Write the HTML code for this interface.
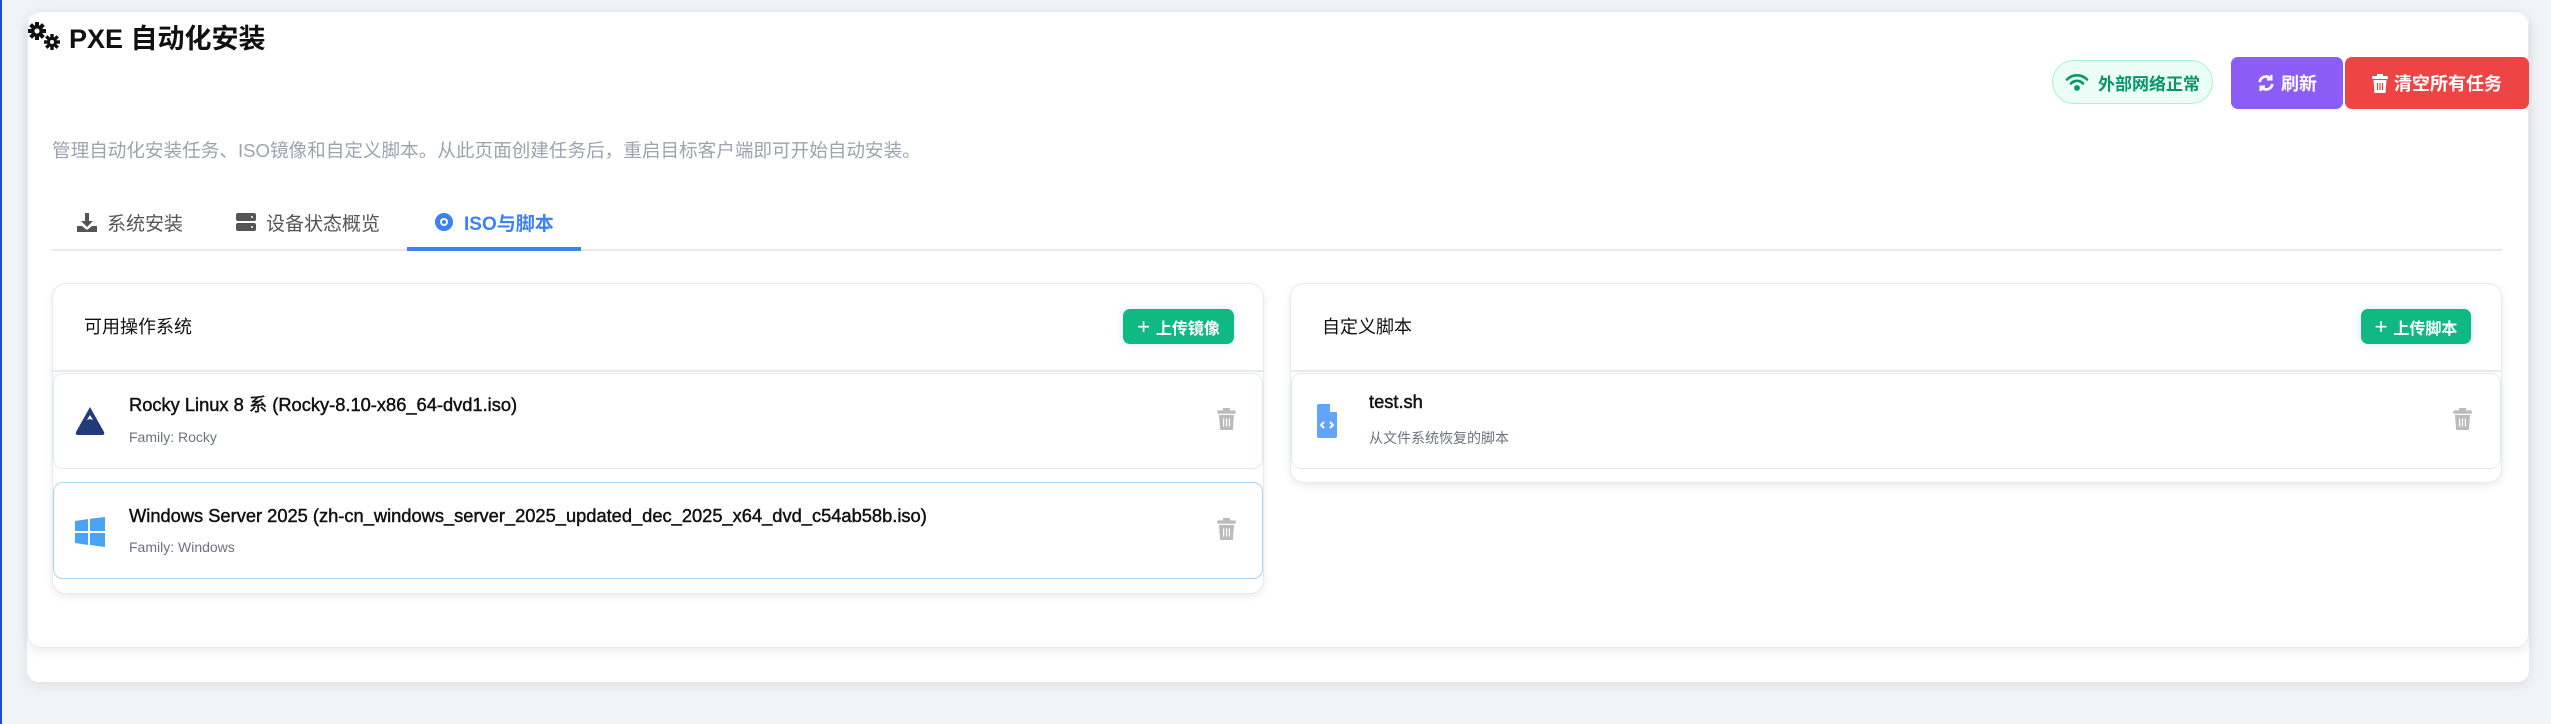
<!DOCTYPE html>
<html><head><meta charset="utf-8"><style>
*{box-sizing:border-box;margin:0;padding:0}
body{width:2551px;height:724px;background:#f1f3f6;font-family:"Liberation Sans","Noto Sans CJK SC",sans-serif;position:relative;overflow:hidden}
.abs{position:absolute}
.outer{left:27px;top:11px;width:2502px;height:671px;background:#fff;border-radius:12px;box-shadow:0 4px 12px rgba(0,0,0,.08)}
.inner{left:27px;top:11px;width:2502px;height:637px;background:#fff;border-radius:14px;border:1px solid #e5e9f0;box-shadow:0 4px 10px rgba(0,0,0,.07)}
.title{left:27px;top:17px;font-size:27px;font-weight:700;color:#111;display:flex;align-items:center;gap:8px;height:38px}
.badge{left:2052px;top:60px;width:161px;height:44px;border-radius:22px;background:#ecfdf5;border:1px solid #a7f3d0;color:#059669;font-weight:700;font-size:17px;display:flex;align-items:center;justify-content:center;gap:9px}
.btn{display:flex;align-items:center;justify-content:center;gap:6px;color:#fff;font-weight:700;font-size:18px;border-radius:7px}
.desc{left:52px;top:136px;font-size:18.6px;color:#9ca3af}
.tab{top:206px;height:32px;display:flex;align-items:center;gap:10px;font-size:19px;color:#555}
.panel{background:#fff;border:1px solid #e5e9f0;border-radius:14px;box-shadow:0 3px 8px rgba(0,0,0,.08)}
.ph{font-size:18px;color:#111}
.up{background:#10b981;color:#fff;font-weight:700;font-size:16px;border-radius:7px;display:flex;align-items:center;justify-content:center;gap:6px;box-shadow:0 0 10px rgba(59,130,246,.2)}
.item{background:#fff;border:1px solid #e3e8f0;border-radius:10px}
.it{font-size:18.3px;font-weight:400;color:#111;-webkit-text-stroke:0.45px #111}
.fm{font-size:14px;color:#6b7280}
</style></head><body>
<div class="abs" style="left:0;top:0;width:2px;height:724px;background:#1d4ed8"></div>
<div class="abs outer"></div>
<div class="abs inner"></div>
<div class="abs title">
<svg width="34" height="30" viewBox="0 0 34 30"><g fill="#111"><circle cx="10" cy="10" r="6"/><g stroke="#111" stroke-width="4"><line x1="10" y1="1" x2="10" y2="19"/><line x1="1" y1="10" x2="19" y2="10"/><line x1="3.6" y1="3.6" x2="16.4" y2="16.4"/><line x1="16.4" y1="3.6" x2="3.6" y2="16.4"/></g><circle cx="10" cy="10" r="2.5" fill="#fff"/><circle cx="25" cy="21" r="5"/><g stroke="#111" stroke-width="3.4"><line x1="25" y1="13" x2="25" y2="29"/><line x1="17" y1="21" x2="33" y2="21"/><line x1="19.3" y1="15.3" x2="30.7" y2="26.7"/><line x1="30.7" y1="15.3" x2="19.3" y2="26.7"/></g><circle cx="25" cy="21" r="2" fill="#fff"/></g></svg>
<span>PXE 自动化安装</span></div>
<div class="abs badge"><svg width="24" height="18" viewBox="0 0 24 18" fill="none" stroke="#059669" stroke-width="2.6" stroke-linecap="round"><path d="M2 6.5a14 14 0 0 1 20 0"/><path d="M6 10.5a8 8 0 0 1 12 0"/><circle cx="12" cy="15" r="1.6" fill="#059669"/></svg>外部网络正常</div>
<div class="abs btn" style="left:2231px;top:57px;width:112px;height:52px;background:#8b5cf6"><svg width="18" height="18" viewBox="0 0 20 20" fill="none" stroke="#fff" stroke-width="3"><path d="M3 9a7 7 0 0 1 12-4"/><path d="M17 11a7 7 0 0 1-12 4"/><path d="M16 1v5h-5" stroke-width="2.5"/><path d="M4 19v-5h5" stroke-width="2.5"/></svg>刷新</div>
<div class="abs btn" style="left:2345px;top:57px;width:184px;height:52px;background:#ef4444"><svg width="16" height="19" viewBox="0 0 16 19" fill="#fff"><rect x="0" y="2" width="16" height="3" rx="1"/><rect x="5" y="0" width="6" height="3"/><path d="M1.5 6h13l-1 13h-11z"/><g stroke="#ef4444" stroke-width="1.2"><line x1="5.5" y1="9" x2="5.5" y2="16"/><line x1="8" y1="9" x2="8" y2="16"/><line x1="10.5" y1="9" x2="10.5" y2="16"/></g></svg>清空所有任务</div>
<div class="abs desc">管理自动化安装任务、ISO镜像和自定义脚本。从此页面创建任务后，重启目标客户端即可开始自动安装。</div>
<div class="abs tab" style="left:77px"><svg width="20" height="20" viewBox="0 0 20 20" fill="#555"><path d="M8 1h4v8h4l-6 6-6-6h4z"/><path d="M0 14h5l5 4 5-4h5v6H0z"/></svg>系统安装</div>
<div class="abs tab" style="left:236px"><svg width="20" height="18" viewBox="0 0 20 18" fill="#555"><rect y="0" width="20" height="8" rx="2"/><rect y="10" width="20" height="8" rx="2"/><circle cx="16" cy="4" r="1" fill="#fff"/><circle cx="16" cy="14" r="1" fill="#fff"/></svg>设备状态概览</div>
<div class="abs tab" style="left:434px;color:#3b82f6;font-weight:700"><svg width="20" height="20" viewBox="0 0 20 20"><circle cx="10" cy="10" r="9" fill="#3b82f6"/><circle cx="10" cy="10" r="4" fill="#fff"/><circle cx="10" cy="10" r="2" fill="#3b82f6"/></svg>ISO与脚本</div>
<div class="abs" style="left:52px;top:249px;width:2450px;height:2px;background:#e5e9f0"></div>
<div class="abs" style="left:407px;top:247px;width:174px;height:4px;background:#3b82f6"></div>

<div class="abs panel" style="left:52px;top:283px;width:1212px;height:311px"></div>
<div class="abs ph" style="left:84px;top:313px">可用操作系统</div>
<div class="abs up" style="left:1123px;top:309px;width:111px;height:35px"><span style="font-size:22px;font-weight:400">+</span>上传镜像</div>
<div class="abs" style="left:52px;top:370px;width:1212px;height:2px;background:#e5e9f0"></div>
<div class="abs item" style="left:53px;top:373px;width:1210px;height:96px"></div>
<svg class="abs" style="left:74px;top:405px" width="32" height="32" viewBox="0 0 32 32"><path d="M16 2 L30 27 Q31 30 28 30 H4 Q1 30 2 27 Z" fill="#233a7a"/><path d="M16 10 l3 5 -3 -1 -3 1z" fill="#fff"/></svg>
<div class="abs it" style="left:129px;top:391px">Rocky Linux 8 系 (Rocky-8.10-x86_64-dvd1.iso)</div>
<div class="abs fm" style="left:129px;top:429px">Family: Rocky</div>
<svg class="abs" style="left:1217px;top:408px" width="19" height="22" viewBox="0 0 16 19" fill="#bbb"><rect x="0" y="2" width="16" height="3" rx="1"/><rect x="5" y="0" width="6" height="3"/><path d="M1.5 6h13l-1 13h-11z"/><g stroke="#fff" stroke-width="1"><line x1="5.5" y1="9" x2="5.5" y2="16"/><line x1="8" y1="9" x2="8" y2="16"/><line x1="10.5" y1="9" x2="10.5" y2="16"/></g></svg>
<div class="abs item" style="left:53px;top:482px;width:1210px;height:97px;border-color:#a9d6f0"></div>
<svg class="abs" style="left:75px;top:517px" width="30" height="30" viewBox="0 0 30 30" fill="#4aa3f5"><path d="M0 4l13-2v12H0z"/><path d="M15 1.7L30 0v14H15z"/><path d="M0 16h13v12L0 26z"/><path d="M15 16h15v14l-15-2z"/></svg>
<div class="abs it" style="left:129px;top:505px">Windows Server 2025 (zh-cn_windows_server_2025_updated_dec_2025_x64_dvd_c54ab58b.iso)</div>
<div class="abs fm" style="left:129px;top:539px">Family: Windows</div>
<svg class="abs" style="left:1217px;top:518px" width="19" height="22" viewBox="0 0 16 19" fill="#bbb"><rect x="0" y="2" width="16" height="3" rx="1"/><rect x="5" y="0" width="6" height="3"/><path d="M1.5 6h13l-1 13h-11z"/><g stroke="#fff" stroke-width="1"><line x1="5.5" y1="9" x2="5.5" y2="16"/><line x1="8" y1="9" x2="8" y2="16"/><line x1="10.5" y1="9" x2="10.5" y2="16"/></g></svg>

<div class="abs panel" style="left:1290px;top:283px;width:1212px;height:200px"></div>
<div class="abs ph" style="left:1322px;top:313px">自定义脚本</div>
<div class="abs up" style="left:2361px;top:309px;width:110px;height:35px"><span style="font-size:22px;font-weight:400">+</span>上传脚本</div>
<div class="abs" style="left:1290px;top:370px;width:1212px;height:2px;background:#e5e9f0"></div>
<div class="abs item" style="left:1291px;top:373px;width:1210px;height:96px"></div>
<svg class="abs" style="left:1317px;top:404px" width="20" height="34" viewBox="0 0 20 34"><path d="M2 0h11l7 8v24q0 2-2 2H2q-2 0-2-2V2q0-2 2-2z" fill="#60a5fa"/><path d="M13 0v8h7" fill="#fff"/><path d="M7 18l-3 3 3 3M13 18l3 3-3 3" stroke="#fff" stroke-width="2" fill="none"/></svg>
<div class="abs it" style="left:1369px;top:391px">test.sh</div>
<div class="abs fm" style="left:1369px;top:428px">从文件系统恢复的脚本</div>
<svg class="abs" style="left:2453px;top:408px" width="19" height="22" viewBox="0 0 16 19" fill="#bbb"><rect x="0" y="2" width="16" height="3" rx="1"/><rect x="5" y="0" width="6" height="3"/><path d="M1.5 6h13l-1 13h-11z"/><g stroke="#fff" stroke-width="1"><line x1="5.5" y1="9" x2="5.5" y2="16"/><line x1="8" y1="9" x2="8" y2="16"/><line x1="10.5" y1="9" x2="10.5" y2="16"/></g></svg>
</body></html>
